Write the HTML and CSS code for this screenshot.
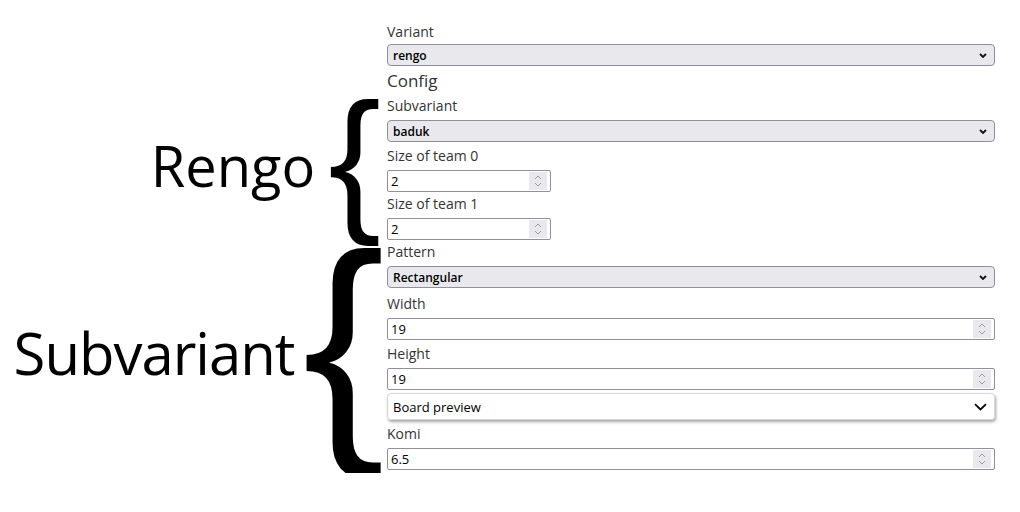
FILE: index.html
```html
<!DOCTYPE html>
<html lang="en">
<head>
  <meta charset="UTF-8">
  <title>Game config</title>
  <link rel="stylesheet" href="styles.css">
</head>
<body>
  <div class="page">
    <div class="notes">
      <div class="note note-rengo">
        <span class="note-text">Rengo</span>
        <span class="brace">{</span>
      </div>
      <div class="note note-sub">
        <span class="note-text">Subvariant</span>
        <span class="brace brace-big">{</span>
      </div>
    </div>

    <form class="config">
      <div class="field field-first">
        <label>Variant</label>
        <div class="select">
          <span>rengo</span>
          <svg class="caret" width="8" height="5" viewBox="0 0 8 5"><path d="M1 1l3 3 3-3" fill="none" stroke="#111" stroke-width="1.8"/></svg>
        </div>
      </div>

      <h3 class="section">Config</h3>

      <div class="field">
        <label>Subvariant</label>
        <div class="select">
          <span>baduk</span>
          <svg class="caret" width="8" height="5" viewBox="0 0 8 5"><path d="M1 1l3 3 3-3" fill="none" stroke="#111" stroke-width="1.8"/></svg>
        </div>
      </div>

      <div class="field">
        <label>Size of team 0</label>
        <div class="num num-small">
          <span>2</span>
          <div class="spin">
            <svg width="8" height="5" viewBox="0 0 8 5"><path d="M1 4l3-3 3 3" fill="none" stroke="#9a9aa6" stroke-width="1"/></svg>
            <svg width="8" height="5" viewBox="0 0 8 5"><path d="M1 1l3 3 3-3" fill="none" stroke="#9a9aa6" stroke-width="1"/></svg>
          </div>
        </div>
      </div>

      <div class="field field-tight">
        <label>Size of team 1</label>
        <div class="num num-small">
          <span>2</span>
          <div class="spin">
            <svg width="8" height="5" viewBox="0 0 8 5"><path d="M1 4l3-3 3 3" fill="none" stroke="#9a9aa6" stroke-width="1"/></svg>
            <svg width="8" height="5" viewBox="0 0 8 5"><path d="M1 1l3 3 3-3" fill="none" stroke="#9a9aa6" stroke-width="1"/></svg>
          </div>
        </div>
      </div>

      <div class="field field-tight">
        <label>Pattern</label>
        <div class="select">
          <span>Rectangular</span>
          <svg class="caret" width="8" height="5" viewBox="0 0 8 5"><path d="M1 1l3 3 3-3" fill="none" stroke="#111" stroke-width="1.8"/></svg>
        </div>
      </div>

      <div class="field field-loose">
        <label>Width</label>
        <div class="num">
          <span>19</span>
          <div class="spin">
            <svg width="8" height="5" viewBox="0 0 8 5"><path d="M1 4l3-3 3 3" fill="none" stroke="#9a9aa6" stroke-width="1"/></svg>
            <svg width="8" height="5" viewBox="0 0 8 5"><path d="M1 1l3 3 3-3" fill="none" stroke="#9a9aa6" stroke-width="1"/></svg>
          </div>
        </div>
      </div>

      <div class="field">
        <label>Height</label>
        <div class="num">
          <span>19</span>
          <div class="spin">
            <svg width="8" height="5" viewBox="0 0 8 5"><path d="M1 4l3-3 3 3" fill="none" stroke="#9a9aa6" stroke-width="1"/></svg>
            <svg width="8" height="5" viewBox="0 0 8 5"><path d="M1 1l3 3 3-3" fill="none" stroke="#9a9aa6" stroke-width="1"/></svg>
          </div>
        </div>
      </div>

      <div class="preview">
        <span>Board preview</span>
        <svg width="13" height="8" viewBox="0 0 13 8"><path d="M1 1.2l5.5 5.3 5.5-5.3" fill="none" stroke="#000" stroke-width="1.8"/></svg>
      </div>

      <div class="field">
        <label>Komi</label>
        <div class="num">
          <span>6.5</span>
          <div class="spin">
            <svg width="8" height="5" viewBox="0 0 8 5"><path d="M1 4l3-3 3 3" fill="none" stroke="#9a9aa6" stroke-width="1"/></svg>
            <svg width="8" height="5" viewBox="0 0 8 5"><path d="M1 1l3 3 3-3" fill="none" stroke="#9a9aa6" stroke-width="1"/></svg>
          </div>
        </div>
      </div>
    </form>
  </div>
</body>
</html>
```

FILE: styles.css
```css
* {
  margin: 0;
  padding: 0;
  box-sizing: border-box;
}

body {
  font-family: 'Open Sans', sans-serif;
  background-color: #fff;
  color: #000;
}

.page {
  display: flex;
}

/* annotations on the left */
.notes {
  width: 387px;
  flex: none;
  display: flex;
  flex-direction: column;
  padding-top: 98px;
}

.note {
  display: flex;
  justify-content: flex-end;
  align-items: center;
}

.note-rengo {
  height: 145px;
  padding-right: 6px;
}

.note-sub {
  height: 226px;
  margin-top: 4px;
  padding-right: 2px;
}

.note-text {
  font-size: 56px;
  line-height: 1;
  margin-right: 13px;
  margin-bottom: 11px;
}

.note-sub .note-text {
  font-size: 58px;
  letter-spacing: -1px;
  margin-right: 8px;
  margin-bottom: 15px;
}

.brace {
  display: block;
  font-family: 'Liberation Sans', sans-serif;
  font-size: 158px;
  line-height: 0.9;
  margin-top: -0.156em;
}

.brace-big {
  font-size: 247px;
}

/* form column */
.config {
  width: 608px;
  padding-top: 22px;
  display: flex;
  flex-direction: column;
}

.field {
  margin-top: 4px;
}

.field-first {
  margin-top: 0;
}

.field-tight {
  margin-top: 2px;
}

.field-loose {
  margin-top: 6px;
}

.field label {
  display: block;
  font-size: 14px;
  line-height: 20px;
  color: #333;
  margin-bottom: 4px;
}

.field-first label {
  margin-bottom: 2px;
}

.section {
  font-size: 17px;
  line-height: 22px;
  font-weight: normal;
  color: #333;
  margin-top: 4px;
}

.select {
  height: 22px;
  background-color: #e9e9ed;
  border: 1px solid #8f8f9d;
  border-radius: 4px;
  display: flex;
  align-items: center;
  justify-content: space-between;
  padding: 0 7px 0 5px;
  font-size: 12px;
  font-weight: 600;
}

.num {
  height: 22px;
  background-color: #fff;
  border: 1px solid #8f8f9d;
  border-radius: 2px;
  display: flex;
  align-items: center;
  justify-content: space-between;
  padding: 0 3px 0 3px;
  font-size: 13px;
}

.num-small {
  width: 164px;
}

.spin {
  width: 18px;
  height: 18px;
  background-color: #e9e9ed;
  display: flex;
  flex-direction: column;
  align-items: center;
  justify-content: center;
  gap: 2px;
}

.spin svg {
  display: block;
}

.preview {
  margin-top: 3px;
  height: 27px;
  border: 1px solid #d6d6d6;
  border-radius: 4px;
  box-shadow: 1px 2px 3px rgba(0, 0, 0, 0.35);
  display: flex;
  align-items: center;
  justify-content: space-between;
  padding: 0 7px 0 5px;
  font-size: 13px;
  font-weight: 500;
}
```
